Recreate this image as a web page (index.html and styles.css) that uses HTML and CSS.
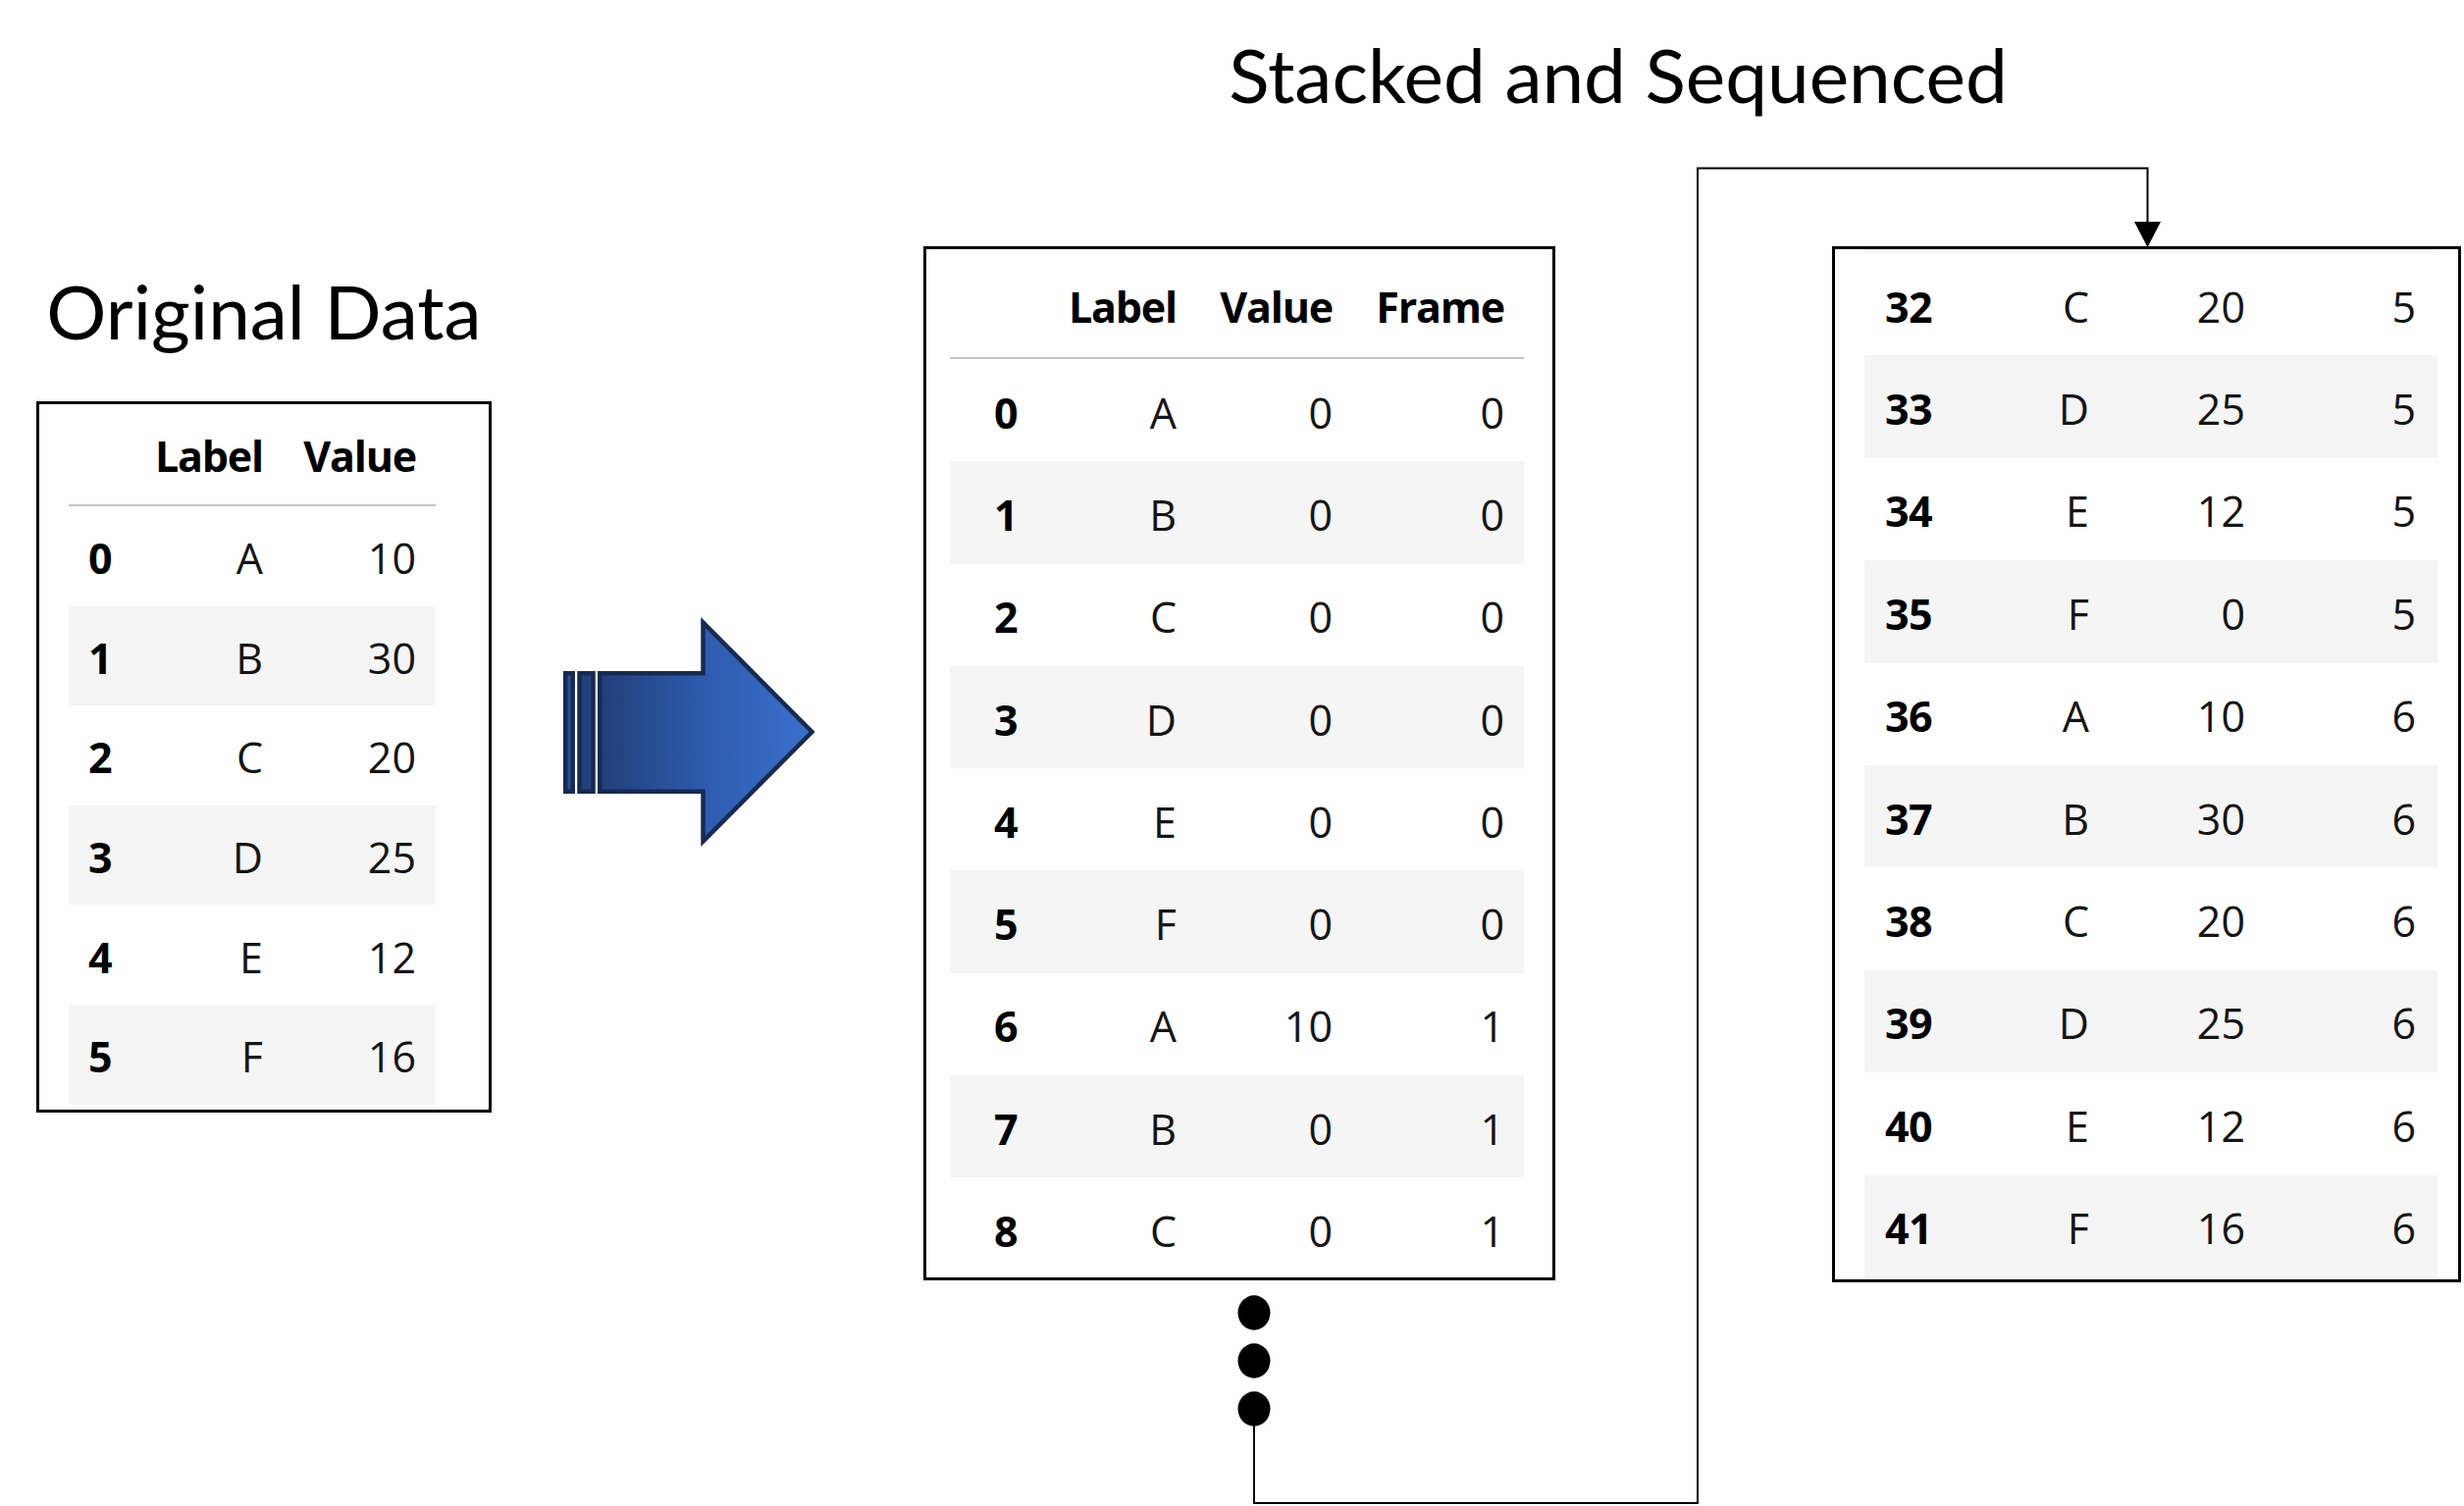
FILE: index.html
```html
<!DOCTYPE html>
<html lang="en">
<head>
<meta charset="utf-8">
<title>Stacked and Sequenced</title>
<link rel="stylesheet" href="styles.css">
</head>
<body>
<div class="page">
  <section class="orig">
    <h2 class="title">Original Data</h2>
    <div class="frame frame-orig">
      <div class="row head"><span></span><span>Label</span><span>Value</span></div>
      <div class="row"><span class="idx">0</span><span>A</span><span>10</span></div>
      <div class="row alt"><span class="idx">1</span><span>B</span><span>30</span></div>
      <div class="row"><span class="idx">2</span><span>C</span><span>20</span></div>
      <div class="row alt"><span class="idx">3</span><span>D</span><span>25</span></div>
      <div class="row"><span class="idx">4</span><span>E</span><span>12</span></div>
      <div class="row alt"><span class="idx">5</span><span>F</span><span>16</span></div>
    </div>
  </section>

  <svg class="big-arrow" width="265" height="242" viewBox="0 0 265 242" aria-hidden="true">
    <defs>
      <linearGradient id="arrowFill" gradientUnits="userSpaceOnUse" x1="39" y1="0" x2="261" y2="0">
        <stop offset="0" stop-color="#213e78"/>
        <stop offset="0.5" stop-color="#2e5cb0"/>
        <stop offset="1" stop-color="#3b71cd"/>
      </linearGradient>
    </defs>
    <rect x="6.25" y="61.25" width="7.5" height="120.5" fill="#2a4f94" stroke="#172b52" stroke-width="4.5"/>
    <rect x="20.5" y="61.25" width="14" height="120.5" fill="#22417c" stroke="#172b52" stroke-width="4.5"/>
    <path d="M41.25 61.25 H146.5 V9.5 L257.5 121 L146.5 232.5 V181.75 H41.25 Z" fill="url(#arrowFill)" stroke="#172b52" stroke-width="4.5" stroke-linejoin="miter"/>
  </svg>

  <section class="stacked">
    <h2 class="title title-wide">Stacked and Sequenced</h2>
    <div class="pair">
      <div class="frame frame-mid">
        <div class="row head"><span></span><span>Label</span><span>Value</span><span>Frame</span></div>
        <div class="row"><span class="idx">0</span><span>A</span><span>0</span><span>0</span></div>
        <div class="row alt"><span class="idx">1</span><span>B</span><span>0</span><span>0</span></div>
        <div class="row"><span class="idx">2</span><span>C</span><span>0</span><span>0</span></div>
        <div class="row alt"><span class="idx">3</span><span>D</span><span>0</span><span>0</span></div>
        <div class="row"><span class="idx">4</span><span>E</span><span>0</span><span>0</span></div>
        <div class="row alt"><span class="idx">5</span><span>F</span><span>0</span><span>0</span></div>
        <div class="row"><span class="idx">6</span><span>A</span><span>10</span><span>1</span></div>
        <div class="row alt"><span class="idx">7</span><span>B</span><span>0</span><span>1</span></div>
        <div class="row"><span class="idx">8</span><span>C</span><span>0</span><span>1</span></div>
      </div>
      <div class="frame frame-right">
        <div class="sliver"></div>
        <div class="row"><span class="idx">32</span><span>C</span><span>20</span><span>5</span></div>
        <div class="row alt"><span class="idx">33</span><span>D</span><span>25</span><span>5</span></div>
        <div class="row"><span class="idx">34</span><span>E</span><span>12</span><span>5</span></div>
        <div class="row alt"><span class="idx">35</span><span>F</span><span>0</span><span>5</span></div>
        <div class="row"><span class="idx">36</span><span>A</span><span>10</span><span>6</span></div>
        <div class="row alt"><span class="idx">37</span><span>B</span><span>30</span><span>6</span></div>
        <div class="row"><span class="idx">38</span><span>C</span><span>20</span><span>6</span></div>
        <div class="row alt"><span class="idx">39</span><span>D</span><span>25</span><span>6</span></div>
        <div class="row"><span class="idx">40</span><span>E</span><span>12</span><span>6</span></div>
        <div class="row alt"><span class="idx">41</span><span>F</span><span>16</span><span>6</span></div>
      </div>
    </div>
  </section>

  <svg class="connector" width="2511" height="1535" viewBox="0 0 2511 1535" aria-hidden="true">
    <ellipse cx="1278" cy="1338" rx="16.5" ry="17.7" fill="#000"/>
    <ellipse cx="1278" cy="1387" rx="16.5" ry="17.7" fill="#000"/>
    <ellipse cx="1278" cy="1436" rx="16.5" ry="17.7" fill="#000"/>
    <polyline points="1278,1450 1278,1532 1730,1532 1730,171.5 2188.5,171.5 2188.5,230" fill="none" stroke="#000" stroke-width="2"/>
    <polygon points="2175,226 2202,226 2188.5,252" fill="#000"/>
  </svg>
</div>
</body>
</html>
```

FILE: styles.css
```css
body {
  margin: 0;
  background: #ffffff;
}

.page {
  position: relative;
  width: 2511px;
  height: 1535px;
  display: flex;
  align-items: flex-start;
  overflow: hidden;
  background: #ffffff;
}

.title {
  margin: 0;
  font-family: Lato, "Open Sans", sans-serif;
  font-weight: 400;
  font-size: 76.5px;
  line-height: 76px;
  color: #000;
  text-align: center;
  white-space: nowrap;
}

/* ---------- left column ---------- */
.orig {
  margin-left: 37px;
  width: 464px;
  padding-top: 278px;
}

.orig .title {
  margin-bottom: 55px;
}

/* ---------- data frames ---------- */
.frame {
  box-sizing: border-box;
  border: 3px solid #000;
  background: #fff;
  overflow: hidden;
  font-family: "Open Sans", "Noto Sans", sans-serif;
  font-size: 43px;
  color: #151515;
}

.row {
  display: grid;
  align-items: center;
  box-sizing: border-box;
}

.row span {
  white-space: nowrap;
  text-align: right;
}

.row .idx {
  text-align: left;
  font-weight: 700;
  color: #000;
  letter-spacing: -0.5px;
}

.row.alt {
  background: #f5f5f5;
}

.row.head {
  font-weight: 700;
  color: #000;
  letter-spacing: -1.2px;
  border-bottom: 2px solid #c4c4c4;
}

/* original */
.frame-orig {
  width: 464px;
  height: 725px;
  padding-left: 30px;
}

.frame-orig .row {
  width: 374px;
  height: 101.6px;
  padding-top: 4px;
  padding-right: 20px;
  grid-template-columns: 80px 118px 156px;
}

.frame-orig .row.head {
  height: 104px;
  padding-top: 3px;
}

.frame-orig .idx {
  padding-left: 20px;
}

/* arrow */
.big-arrow {
  display: block;
  flex: none;
  margin-left: 69px;
  margin-top: 625px;
}

/* ---------- stacked section ---------- */
.stacked {
  margin-left: 106px;
  padding-top: 37px;
}

.title-wide {
  width: 1416px;
  margin-bottom: 138px;
}

.pair {
  display: flex;
  align-items: flex-start;
  gap: 282px;
}

.frame-mid {
  width: 644px;
  height: 1054px;
  padding-left: 24px;
}

.frame-mid .row {
  width: 585px;
  height: 104.3px;
  padding-top: 4px;
  padding-right: 20px;
  grid-template-columns: 112px 119px 159px 175px;
}

.frame-mid .row.head {
  height: 112px;
  padding-top: 6px;
}

.frame-mid .idx {
  padding-left: 45px;
}

.frame-right {
  width: 641px;
  height: 1056px;
  padding-left: 30px;
}

.frame-right .sliver {
  width: 584px;
  height: 4px;
  background: #f5f5f5;
}

.frame-right .row {
  width: 584px;
  height: 104.4px;
  padding-top: 4px;
  padding-right: 22px;
  grid-template-columns: 120px 109px 159px 174px;
}

.frame-right .idx {
  padding-left: 21px;
}

/* connector overlay */
.connector {
  position: absolute;
  left: 0;
  top: 0;
  pointer-events: none;
}
```
